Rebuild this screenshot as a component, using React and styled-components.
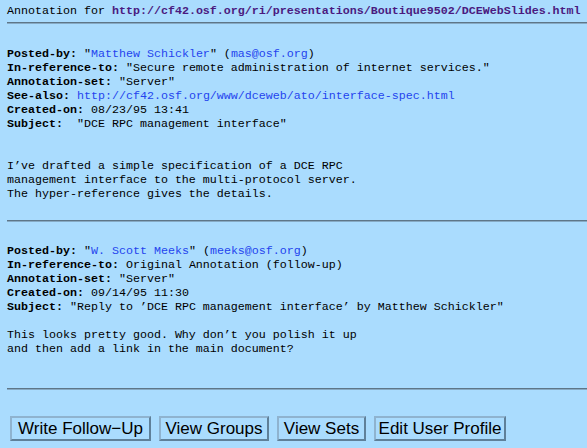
import React from "react";
import styled, { createGlobalStyle } from "styled-components";

const GlobalStyle = createGlobalStyle`
  html, body {
    margin: 0;
    padding: 0;
    background: #aadcfe;
  }
`;

const Page = styled.div`
  min-height: 448px;
  padding: 4px 0 0 7px;
  box-sizing: border-box;
  background: #aadcfe;
  color: #000;
  font-family: "Liberation Mono", "DejaVu Sans Mono", monospace;
  font-size: 11.67px;
  line-height: 14px;
`;

const Header = styled.div`
  white-space: pre;
`;

const HeaderLink = styled.a`
  color: #4a1a80;
  font-weight: bold;
  text-decoration: none;
`;

const Rule = styled.hr`
  height: 0;
  margin: ${({ $top }) => $top}px 0 ${({ $bottom }) => $bottom}px 0;
  border: none;
  border-top: 1px solid #5e7688;
  border-bottom: 1px solid #86aac4;
`;

const Annotation = styled.div`
  display: flex;
  flex-direction: column;
`;

const Field = styled.div`
  white-space: pre;
`;

const Label = styled.b`
  font-weight: bold;
`;

const Link = styled.a`
  color: #2444ee;
  text-decoration: none;
`;

const Body = styled.div`
  white-space: pre;
  margin-top: ${({ $gap }) => $gap}px;
`;

const Buttons = styled.div`
  display: flex;
  gap: 8px;
  padding-left: 3px;
`;

const Button = styled.button`
  width: ${({ $w }) => $w}px;
  height: 25px;
  padding: 0;
  margin: 0;
  background: #aadcfe;
  border: 2px solid;
  border-color: #8fb3cf #5f8099 #5f8099 #8fb3cf;
  font-family: "Liberation Sans", Arial, sans-serif;
  font-size: 17px;
  line-height: 21px;
  color: #000;
  text-align: center;
  white-space: nowrap;
`;

const annotations = [
  {
    author: "Matthew Schickler",
    email: "mas@osf.org",
    ref: "\"Secure remote administration of internet services.\"",
    set: "\"Server\"",
    seeAlso: "http://cf42.osf.org/www/dceweb/ato/interface-spec.html",
    created: "08/23/95 13:41",
    subject: " \"DCE RPC management interface\"",
    gap: 28,
    body: [
      "I\u2019ve drafted a simple specification of a DCE RPC",
      "management interface to the multi-protocol server.",
      "The hyper-reference gives the details.",
    ],
  },
  {
    author: "W. Scott Meeks",
    email: "meeks@osf.org",
    ref: "Original Annotation (follow-up)",
    set: "\"Server\"",
    created: "09/14/95 11:30",
    subject: "\"Reply to \u2019DCE RPC management interface\u2019 by Matthew Schickler\"",
    gap: 14,
    body: [
      "This looks pretty good. Why don\u2019t you polish it up",
      "and then add a link in the main document?",
    ],
  },
];

const buttons = [
  { label: "Write Follow\u2212Up", width: 141 },
  { label: "View Groups", width: 110 },
  { label: "View Sets", width: 89 },
  { label: "Edit User Profile", width: 132 },
];

const AnnotationBlock = ({ a }) => (
  <Annotation>
    <Field>
      <Label>Posted-by:</Label> "<Link href="#">{a.author}</Link>" (
      <Link href="#">{a.email}</Link>)
    </Field>
    <Field>
      <Label>In-reference-to:</Label> {a.ref}
    </Field>
    <Field>
      <Label>Annotation-set:</Label> {a.set}
    </Field>
    {a.seeAlso && (
      <Field>
        <Label>See-also:</Label> <Link href="#">{a.seeAlso}</Link>
      </Field>
    )}
    <Field>
      <Label>Created-on:</Label> {a.created}
    </Field>
    <Field>
      <Label>Subject:</Label> {a.subject}
    </Field>
    <Body $gap={a.gap}>{a.body.join("\n")}</Body>
  </Annotation>
);

export default function App() {
  return (
    <>
      <GlobalStyle />
      <Page>
        <Header>
          Annotation for{" "}
          <HeaderLink href="#">
            http://cf42.osf.org/ri/presentations/Boutique9502/DCEWebSlides.html
          </HeaderLink>
        </Header>
        <Rule $top={4} $bottom={23} />
        <AnnotationBlock a={annotations[0]} />
        <Rule $top={19} $bottom={22} />
        <AnnotationBlock a={annotations[1]} />
        <Rule $top={32} $bottom={26} />
        <Buttons>
          {buttons.map((b) => (
            <Button key={b.label} $w={b.width}>
              {b.label}
            </Button>
          ))}
        </Buttons>
      </Page>
    </>
  );
}
